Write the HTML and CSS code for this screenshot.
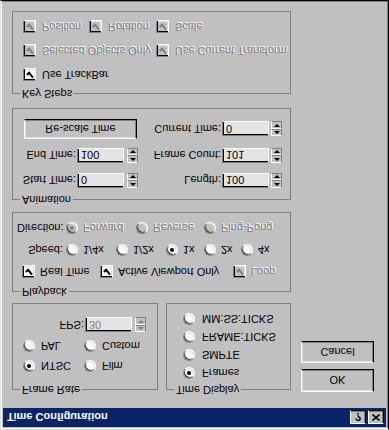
FILE: index.html
```html
<!DOCTYPE html>
<html>
<head>
    <title>Time Configuration</title>
    <link rel="stylesheet" href="styles.css">
</head>
<body>
<div class="window">
    <div class="titlebar">
        <span class="title">Time Configuration</span>
        <div class="title-buttons">
            <span class="tbtn">?</span>
            <span class="tbtn">
                <svg width="8" height="7" viewBox="0 0 8 7"><path d="M0.5 0.5 L7.5 6.5 M7.5 0.5 L0.5 6.5" stroke="#000" stroke-width="1.6"/></svg>
            </span>
        </div>
    </div>

    <div class="client">
        <div class="top-row">
            <fieldset class="group frame-rate">
                <legend>Frame Rate</legend>
                <div class="fr-body">
                    <div class="row">
                        <label class="opt fr-col"><span class="radio on"></span>NTSC</label>
                        <label class="opt"><span class="radio"></span>Film</label>
                    </div>
                    <div class="row">
                        <label class="opt fr-col"><span class="radio"></span>PAL</label>
                        <label class="opt"><span class="radio"></span>Custom</label>
                    </div>
                    <div class="row fps-row">
                        <span class="fps-label">FPS:</span>
                        <span class="field off">30</span>
                        <span class="spin off"><span class="spin-btn up"></span><span class="spin-btn dn"></span></span>
                    </div>
                </div>
            </fieldset>

            <fieldset class="group time-display">
                <legend>Time Display</legend>
                <div class="td-body">
                    <label class="opt"><span class="radio on"></span>Frames</label>
                    <label class="opt"><span class="radio"></span>SMPTE</label>
                    <label class="opt"><span class="radio"></span>FRAME:TICKS</label>
                    <label class="opt"><span class="radio"></span>MM:SS:TICKS</label>
                </div>
            </fieldset>

            <div class="dialog-buttons">
                <button class="btn btn-ok">OK</button>
                <button class="btn btn-cancel">Cancel</button>
            </div>
        </div>

        <fieldset class="group playback">
            <legend>Playback</legend>
            <div class="pb-body">
                <div class="row pb-checks">
                    <label class="opt pb-real"><span class="check on"></span>Real Time</label>
                    <label class="opt pb-active"><span class="check on"></span>Active Viewport Only</label>
                    <label class="opt off"><span class="check on off"></span>Loop</label>
                </div>
                <div class="row">
                    <span class="pb-label">Speed:</span>
                    <label class="opt sp1"><span class="radio"></span>1/4x</label>
                    <label class="opt sp1"><span class="radio"></span>1/2x</label>
                    <label class="opt sp2"><span class="radio on"></span>1x</label>
                    <label class="opt sp3"><span class="radio"></span>2x</label>
                    <label class="opt"><span class="radio"></span>4x</label>
                </div>
                <div class="row">
                    <span class="pb-label">Direction:</span>
                    <label class="opt off dir1"><span class="radio on off"></span>Forward</label>
                    <label class="opt off dir2"><span class="radio off"></span>Reverse</label>
                    <label class="opt off"><span class="radio off"></span>Ping-Pong</label>
                </div>
            </div>
        </fieldset>

        <fieldset class="group animation">
            <legend>Animation</legend>
            <div class="an-body">
                <div class="row an-row">
                    <div class="pair-left">
                        <span class="an-label">Start Time:</span>
                        <span class="field">0</span>
                        <span class="spin"><span class="spin-btn up"></span><span class="spin-btn dn"></span></span>
                    </div>
                    <div class="pair-right">
                        <span class="an-label">Length:</span>
                        <span class="field">100</span>
                        <span class="spin"><span class="spin-btn up"></span><span class="spin-btn dn"></span></span>
                    </div>
                </div>
                <div class="row an-row">
                    <div class="pair-left">
                        <span class="an-label">End Time:</span>
                        <span class="field">100</span>
                        <span class="spin"><span class="spin-btn up"></span><span class="spin-btn dn"></span></span>
                    </div>
                    <div class="pair-right">
                        <span class="an-label">Frame Count:</span>
                        <span class="field">101</span>
                        <span class="spin"><span class="spin-btn up"></span><span class="spin-btn dn"></span></span>
                    </div>
                </div>
                <div class="row an-row an-last">
                    <div class="pair-left">
                        <button class="btn btn-rescale">Re-scale Time</button>
                    </div>
                    <div class="pair-right">
                        <span class="an-label">Current Time:</span>
                        <span class="field">0</span>
                        <span class="spin"><span class="spin-btn up"></span><span class="spin-btn dn"></span></span>
                    </div>
                </div>
            </div>
        </fieldset>

        <fieldset class="group key-steps">
            <legend>Key Steps</legend>
            <div class="ks-body">
                <div class="row">
                    <label class="opt"><span class="check on"></span>Use TrackBar</label>
                </div>
                <div class="row">
                    <label class="opt off ks-wide"><span class="check on off"></span>Selected Objects Only</label>
                    <label class="opt off"><span class="check on off"></span>Use Current Transform</label>
                </div>
                <div class="row">
                    <label class="opt off ks-col1"><span class="check on off"></span>Position</label>
                    <label class="opt off ks-col2"><span class="check on off"></span>Rotation</label>
                    <label class="opt off"><span class="check on off"></span>Scale</label>
                </div>
            </div>
        </fieldset>
    </div>
</div>
</body>
</html>
```

FILE: styles.css
```css
/* General */
body {
    margin: 0;
    background-color: #c0c0c0;
    font-family: "Liberation Sans", Arial, sans-serif;
    font-size: 11px;
    color: #000;
}

/* the dialog is shown upside down */
.window {
    width: 389px;
    height: 430px;
    box-sizing: border-box;
    padding: 2px;
    background-color: #c0c0c0;
    border: 1px solid;
    border-color: #dfdfdf #000 #000 #dfdfdf;
    box-shadow: inset 1px 1px #fff, inset -1px -1px #808080;
    display: flex;
    flex-direction: column;
    transform: scaleY(-1);
}

/* Title bar */
.titlebar {
    height: 19px;
    flex: none;
    background-color: #0a246a;
    color: #fff;
    display: flex;
    align-items: center;
    padding: 0 2px 0 4px;
}

.title {
    flex: 1;
    font-weight: bold;
}

.title-buttons {
    display: flex;
    gap: 2px;
}

.tbtn {
    width: 16px;
    height: 14px;
    box-sizing: border-box;
    background-color: #c0c0c0;
    color: #000;
    font-weight: bold;
    font-size: 11px;
    display: flex;
    align-items: center;
    justify-content: center;
    border: 1px solid;
    border-color: #fff #000 #000 #fff;
    box-shadow: inset -1px -1px #808080;
}

/* Client area */
.client {
    padding: 12px 0 0 9px;
    display: flex;
    flex-direction: column;
}

.top-row {
    display: flex;
    align-items: flex-start;
}

.group {
    margin: 0;
    padding: 0;
    min-width: 0;
    box-sizing: border-box;
    border: 1px solid #808080;
}

.group legend {
    margin-left: 7px;
    padding: 0 2px;
    line-height: 13px;
}

.frame-rate {
    width: 146px;
    height: 93px;
}

.time-display {
    width: 125px;
    height: 93px;
    margin-left: 8px;
}

.playback {
    width: 279px;
    height: 86px;
    margin-top: 5px;
}

.animation {
    width: 279px;
    height: 98px;
    margin-top: 6px;
}

.key-steps {
    width: 279px;
    height: 89px;
    margin-top: 8px;
}

.row {
    display: flex;
    align-items: center;
    height: 16px;
}

/* Options */
.opt {
    display: flex;
    align-items: center;
    white-space: nowrap;
}

.opt.off, .pb-label.off {
    color: #808080;
    text-shadow: 1px 1px #fff;
}

.check {
    width: 13px;
    height: 13px;
    flex: none;
    box-sizing: border-box;
    margin-right: 6px;
    background-color: #fff;
    border: 1px solid;
    border-color: #808080 #fff #fff #808080;
    box-shadow: inset 1px 1px #000, inset -1px -1px #dfdfdf;
    display: flex;
    align-items: center;
    justify-content: center;
}

.check.off {
    background-color: #c0c0c0;
}

.check.on::after {
    content: "";
    width: 2px;
    height: 5px;
    margin-top: -2px;
    border: solid #000;
    border-width: 0 2px 2px 0;
    transform: rotate(40deg);
}

.check.on.off::after {
    border-color: #808080;
}

.radio {
    width: 12px;
    height: 12px;
    flex: none;
    box-sizing: border-box;
    margin-right: 6px;
    border-radius: 50%;
    background-color: #fff;
    border: 1px solid;
    border-color: #808080 #fff #fff #808080;
    box-shadow: inset 1px 1px #404040, inset -1px -1px #dfdfdf;
    display: flex;
    align-items: center;
    justify-content: center;
}

.radio.off {
    background-color: #c0c0c0;
}

.radio.on::after {
    content: "";
    width: 4px;
    height: 4px;
    border-radius: 50%;
    background-color: #000;
}

.radio.on.off::after {
    background-color: #808080;
}

/* Edit fields and spinners */
.field {
    width: 47px;
    height: 15px;
    flex: none;
    box-sizing: border-box;
    padding-left: 3px;
    background-color: #e4e4e4;
    border: 1px solid;
    border-color: #808080 #fff #fff #808080;
    box-shadow: inset 1px 1px #000, inset -1px -1px #dfdfdf;
    display: flex;
    align-items: center;
}

.field.off {
    color: #808080;
}

.spin {
    width: 11px;
    height: 15px;
    flex: none;
    display: flex;
    flex-direction: column;
    margin-left: 3px;
}

.spin-btn {
    flex: 1;
    box-sizing: border-box;
    border: 1px solid;
    border-color: #fff #808080 #808080 #fff;
    display: flex;
    align-items: center;
    justify-content: center;
}

.spin-btn::after {
    content: "";
    border-left: 3px solid transparent;
    border-right: 3px solid transparent;
}

.spin-btn.up::after {
    border-bottom: 3px solid #000;
}

.spin-btn.dn::after {
    border-top: 3px solid #000;
}

.spin.off .spin-btn.up::after {
    border-bottom-color: #808080;
}

.spin.off .spin-btn.dn::after {
    border-top-color: #808080;
}

/* Buttons */
.btn {
    font-family: inherit;
    font-size: 11px;
    color: #000;
    padding: 0;
    box-sizing: border-box;
    background-color: #c0c0c0;
    border: 1px solid;
    border-color: #fff #000 #000 #fff;
    box-shadow: inset -1px -1px #808080, inset 1px 1px #dfdfdf;
}

.dialog-buttons {
    margin-left: 10px;
    padding-top: 4px;
    display: flex;
    flex-direction: column;
    gap: 6px;
}

.btn-ok {
    width: 73px;
    height: 23px;
}

.btn-cancel {
    width: 73px;
    height: 22px;
}

.btn-rescale {
    width: 113px;
    height: 20px;
    margin-left: 2px;
}

/* Frame Rate */
.fr-body {
    padding: 9px 0 0 10px;
    display: flex;
    flex-direction: column;
    gap: 4px;
}

.fr-col {
    width: 61px;
}

.fps-row {
    margin-top: 1px;
}

.fps-label {
    width: 61px;
    text-align: right;
    margin-right: 1px;
}

/* Time Display */
.td-body {
    padding: 3px 0 0 16px;
    display: flex;
    flex-direction: column;
    gap: 4px;
}

.td-body .opt {
    height: 14px;
}

.td-body .radio {
    margin-right: 7px;
}

/* Playback */
.pb-body {
    padding: 5px 0 0 4px;
    display: flex;
    flex-direction: column;
    gap: 6px;
}

.pb-body .radio, .pb-body .check {
    margin-right: 5px;
}

.pb-checks {
    padding-left: 5px;
}

.pb-real {
    width: 78px;
}

.pb-active {
    width: 133px;
}

.pb-label {
    width: 46px;
    text-align: right;
    margin-right: 3px;
}

.sp1 {
    width: 50px;
}

.sp2 {
    width: 38px;
}

.sp3 {
    width: 37px;
}

.dir1 {
    width: 70px;
}

.dir2 {
    width: 68px;
}

/* Animation */
.an-body {
    padding: 5px 0 0 9px;
    display: flex;
    flex-direction: column;
    gap: 10px;
}

.an-row {
    height: 15px;
}

.an-last {
    height: 20px;
    margin-top: -1px;
}

.pair-left, .pair-right {
    display: flex;
    align-items: center;
}

.pair-left {
    width: 116px;
}

.pair-right {
    margin-left: 12px;
}

.pair-left .an-label {
    width: 54px;
}

.pair-right .an-label {
    width: 71px;
}

.an-label {
    text-align: right;
    margin-right: 1px;
    white-space: nowrap;
}

.pair-right .spin {
    margin-left: 2px;
}

/* Key Steps */
.ks-body {
    padding: 4px 0 0 10px;
    display: flex;
    flex-direction: column;
    gap: 8px;
}

.ks-col1 {
    width: 66px;
}

.ks-col2 {
    width: 67px;
}

.ks-wide {
    width: 133px;
}
```
